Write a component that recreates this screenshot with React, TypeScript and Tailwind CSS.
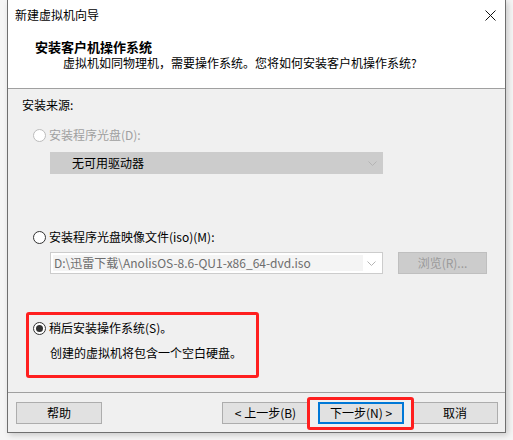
import React from "react";

const FONT = "font-['Noto_Sans_CJK_SC','Microsoft_YaHei',sans-serif]";

function Radio({ checked, disabled }: { checked?: boolean; disabled?: boolean }) {
  return (
    <span
      className={`flex h-[13px] w-[13px] shrink-0 items-center justify-center rounded-full border bg-white ${
        disabled ? "border-[#bcbcbc]" : "border-[#333333]"
      }`}
    >
      {checked && <span className="h-[7px] w-[7px] rounded-full bg-[#333333]" />}
    </span>
  );
}

function Chevron({ color }: { color: string }) {
  return (
    <svg width="9" height="5" viewBox="0 0 9 5" fill="none">
      <path d="M0.5 0.5 L4.5 4.5 L8.5 0.5" stroke={color} strokeWidth="1" />
    </svg>
  );
}

function Button({ label, className = "" }: { label: string; className?: string }) {
  return (
    <button
      type="button"
      className={`flex h-[22px] w-[86px] items-center justify-center border border-[#adadad] bg-[#e1e1e1] text-[12px] leading-none text-black ${className}`}
    >
      {label}
    </button>
  );
}

export default function App() {
  return (
    <div className={`h-[440px] w-[513px] bg-[#f5f5f5] pl-[7px] ${FONT}`}>
      <div className="flex h-[433px] w-[499px] flex-col border-x border-b border-[#6f6f6f] bg-[#f0f0f0] shadow-[2px_2px_6px_rgba(0,0,0,0.18)]">
        {/* header */}
        <div className="h-[89px] border-b border-[#a0a0a0] bg-white">
          <div className="flex h-[30px] items-center justify-between pl-[7px] pr-[9px]">
            <span className="text-[12px] leading-[16px] text-black">新建虚拟机向导</span>
            <svg width="11" height="11" viewBox="0 0 11 11" fill="none">
              <path d="M0.5 0.5 L10.5 10.5 M10.5 0.5 L0.5 10.5" stroke="#111" strokeWidth="1" />
            </svg>
          </div>
          <div className="mt-[9px] pl-[27px] text-[13px] font-bold leading-[16px] text-black">
            安装客户机操作系统
          </div>
          <div className="pl-[55px] text-[12px] leading-[16px] text-black">
            虚拟机如同物理机，需要操作系统。您将如何安装客户机操作系统?
          </div>
        </div>

        {/* body */}
        <div className="flex h-[304px] flex-col border-b border-[#a0a0a0] pt-[8px] text-[12px] leading-[16px]">
          <div className="pl-[14px] text-black">安装来源:</div>

          <div className="mt-[14px] flex items-center gap-[3px] pl-[25px] text-[#a0a0a0]">
            <Radio disabled />
            <span>安装程序光盘(D):</span>
          </div>
          <div className="ml-[42px] mt-[9px] flex h-[22px] w-[333px] items-center justify-between bg-[#cccccc] pl-[22px] pr-[6px] text-black">
            <span>无可用驱动器</span>
            <Chevron color="#b4b4b4" />
          </div>

          <div className="mt-[55px] flex items-center gap-[3px] pl-[25px] text-black">
            <Radio />
            <span>安装程序光盘映像文件(iso)(M):</span>
          </div>
          <div className="ml-[42px] mt-[7px] flex items-center gap-[15px]">
            <div className="flex h-[22px] w-[333px] items-center border border-[#cccccc] bg-white p-[2px]">
              <div className="flex h-full w-[310px] items-center bg-[#f4f4f4] pl-[1px] text-[#6d6d6d]">
                D:\迅雷下载\AnolisOS-8.6-QU1-x86_64-dvd.iso
              </div>
              <div className="flex flex-1 justify-center">
                <Chevron color="#b4b4b4" />
              </div>
            </div>
            <div className="flex h-[22px] w-[89px] items-center justify-center border border-[#bfbfbf] bg-[#cccccc] text-[#9a9a9a]">
              浏览(R)...
            </div>
          </div>

          <div className="ml-[18px] mt-[38px] h-[66px] w-[233px] rounded-[3px] border-[3px] border-[#ff1f1f] pt-[5px]">
            <div className="flex items-center gap-[3px] pl-[4px] text-black">
              <Radio checked />
              <span>稍后安装操作系统(S)。</span>
            </div>
            <div className="mt-[9px] pl-[21px] text-black">创建的虚拟机将包含一个空白硬盘。</div>
          </div>
        </div>

        {/* footer */}
        <div className="flex pt-[9px]">
          <Button label="帮助" className="ml-[8px]" />
          <Button label="< 上一步(B)" className="ml-[120px] w-[87px]" />
          <div className="relative ml-[9px]">
            <button
              type="button"
              className="flex h-[22px] w-[86px] items-center justify-center border-2 border-[#0078d7] bg-[#e1e1e1] text-[12px] leading-none text-black"
            >
              下一步(N) &gt;
            </button>
            <div className="pointer-events-none absolute -bottom-[6px] -left-[11px] -right-[10px] -top-[5px] rounded-[3px] border-[3px] border-[#ff1f1f]" />
          </div>
          <Button label="取消" className="ml-[8px]" />
        </div>
      </div>
    </div>
  );
}
